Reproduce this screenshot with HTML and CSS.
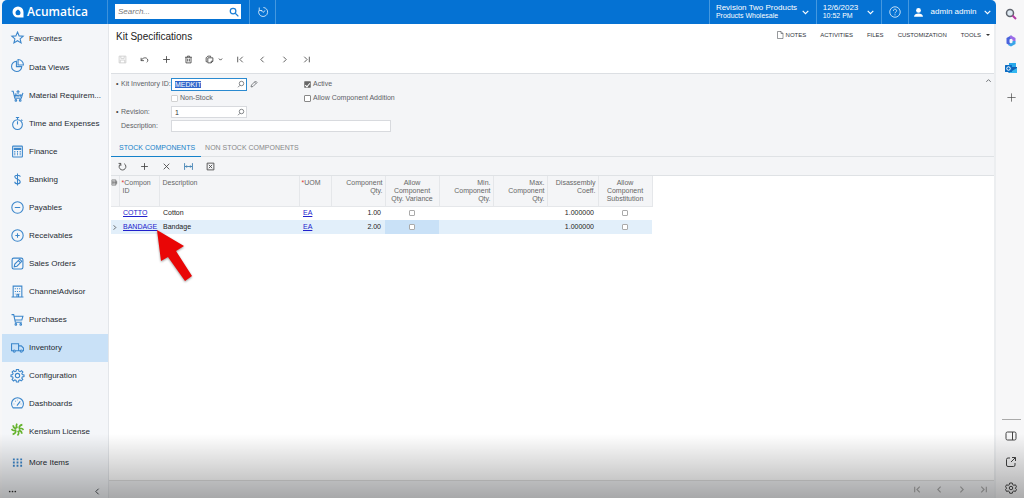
FILE: index.html
```
<!DOCTYPE html>
<html lang="en">
<head>
<meta charset="utf-8">
<title>Kit Specifications - Acumatica</title>
<link rel="stylesheet" href="styles.css">
</head>
<body>
<svg class="defs" aria-hidden="true">
  <symbol id="plus" viewBox="0 0 16 16"><path d="M8 2v12M2 8h12"/></symbol>
  <symbol id="left" viewBox="0 0 16 16"><path d="M10 3 5 8l5 5"/></symbol>
  <symbol id="right" viewBox="0 0 16 16"><path d="m6 3 5 5-5 5"/></symbol>
  <symbol id="down" viewBox="0 0 16 16"><path d="m3 5 5 5 5-5"/></symbol>
  <symbol id="up" viewBox="0 0 16 16"><path d="m3 11 5-5 5 5"/></symbol>
  <symbol id="first" viewBox="0 0 16 16"><path d="M3 3v10M12 3 7 8l5 5"/></symbol>
  <symbol id="last" viewBox="0 0 16 16"><path d="M13 3v10M4 3l5 5-5 5"/></symbol>
  <symbol id="lens" viewBox="0 0 16 16"><circle cx="9" cy="7" r="4.5"/><path d="m6 10.500-4 4"/></symbol>
</svg>
<div class="window">
  <div class="app">
    <header class="topbar">
      <a class="brand" href="#"><svg class="brand-mark" viewBox="0 0 24 24"><path fill="#fff" fill-rule="evenodd" d="M12 1A11 11 0 1 0 12 23H23V12A11 11 0 0 0 12 1Zm0 6c3 2 5 4 5 6.500a5 5 0 0 1-10 0C7 11 9 9 12 7Z"/></svg>Acumatica</a>
      <label class="search"><input type="search" placeholder="Search..." aria-label="Search"><svg class="icon" viewBox="0 0 16 16"><circle cx="6.500" cy="6.500" r="4.500"/><path d="m10 10 5 5"/></svg></label>
      <button class="top-btn recent" aria-label="Recent"><svg class="icon" viewBox="0 0 16 16"><path d="M8.500 2a6 6 0 1 1-6 4M3 2v4h4M5.500 6 8 8.500 11 6"/></svg></button>
      <button class="top-btn company"><span class="two">Revision Two Products<small>Products Wholesale</small></span><svg class="icon"><use href="#down"/></svg></button>
      <button class="top-btn date"><span class="two">12/6/2023<small>10:52 PM</small></span><svg class="icon"><use href="#down"/></svg></button>
      <button class="top-btn help" aria-label="Help"><svg class="icon" viewBox="0 0 16 16"><circle cx="8" cy="8" r="7"/><path d="M5.800 6.500C5.800 3.500 10.200 3.500 10.200 6.300 10.200 8 8 8 8 9.800M8 11v1.500"/></svg></button>
      <button class="top-btn user"><svg class="icon person" viewBox="0 0 16 16"><circle cx="8" cy="5" r="3.500"/><path d="M1.500 14c0-6 13-6 13 0Z"/></svg>admin admin<svg class="icon"><use href="#down"/></svg></button>
    </header>
    <div class="body">
      <nav class="sidebar">
        <a class="tall" href="#"><svg viewBox="0 0 24 24"><path d="m12 2 3 7 7.500.500-5.700 5 1.800 7.500-6.600-4-6.600 4 1.800-7.500-5.700-5L9 9Z"/></svg><span>Favorites</span></a>
        <a class="tall" href="#"><svg class="raised" viewBox="0 0 24 24"><path d="M10 4a9.500 9.500 0 1 0 10 10h-10ZM13 1v10h10A10 10 0 0 0 13 1Z"/></svg><span>Data Views</span></a>
        <a href="#"><svg viewBox="0 0 24 24"><path d="M1 4h3l3 13h12l3-10M6 12l14-1M13 2v7M10 5h6M9 8v7M13 12v3M17 10v5"/><circle cx="9" cy="21" r="1.500"/><circle cx="17" cy="21" r="1.500"/></svg><span>Material Requirem...</span></a>
        <a href="#"><svg viewBox="0 0 24 24"><circle cx="12" cy="14" r="9"/><path d="M12 14V8M9 1h6M12 1v4M19 5l2 2"/></svg><span>Time and Expenses</span></a>
        <a href="#"><svg viewBox="0 0 24 24"><rect x="3" y="2" width="18" height="20" rx="1"/><path d="M6 6h12v2H6zM6 12h2M11 12h2M16 12h2M6 15h2M11 15h2M16 15h2M6 18h2M11 18h2M16 18h2"/></svg><span>Finance</span></a>
        <a href="#"><svg viewBox="0 0 24 24"><path d="M17 7c0-4-10-4-10 0 0 5 10 4 10 9 0 5-10 5-10 0M12 1v22"/></svg><span>Banking</span></a>
        <a href="#"><svg viewBox="0 0 24 24"><circle cx="12" cy="12" r="10.500"/><path d="M7 12h10"/></svg><span>Payables</span></a>
        <a href="#"><svg viewBox="0 0 24 24"><circle cx="12" cy="12" r="10.500"/><path d="M8 12h8M12 8v8"/></svg><span>Receivables</span></a>
        <a href="#"><svg viewBox="0 0 24 24"><rect x="2" y="2" width="20" height="20" rx="3"/><path d="m6 18 1-5 9-9 4 4-9 9ZM14 7l3 3"/></svg><span>Sales Orders</span></a>
        <a href="#"><svg viewBox="0 0 24 24"><path d="M1 22h22M4 22V2h16v20M8 6v2M12 6v2M16 6v2M8 11v2M12 11v2M16 11v2M8 16v1M16 16v1M11 22v-5h3v5"/></svg><span>ChannelAdvisor</span></a>
        <a href="#"><svg viewBox="0 0 24 24"><path d="M1 3h4l3 14h12M6 6h16l-2 7H7"/><circle cx="9" cy="21" r="1.500"/><circle cx="18" cy="21" r="1.500"/></svg><span>Purchases</span></a>
        <a class="current" href="#"><svg viewBox="0 0 24 24"><path d="M4 18H1V5h13v13H8M14 9h5l4 4v5h-2M14 18h3"/><circle cx="6" cy="18.500" r="2"/><circle cx="19" cy="18.500" r="2"/></svg><span>Inventory</span></a>
        <a href="#"><svg viewBox="0 0 24 24"><circle cx="12" cy="12" r="4"/><path d="M10 1h4l.6 3 2.200.900L19.400 3 22 5.800 20 8.300l.9 2L24 11v3l-3.200.7-.9 2.100L21.700 19.400 19 22l-2.500-1.800-2.100.8L14 24h-4l-.6-3-2.200-.9L4.600 22 2 19.200l1.900-2.500L3 14.600.0 14v-3l3-.8.900-2L2 5.600 4.800 3l2.500 1.800 2.100-.8Z"/></svg><span>Configuration</span></a>
        <a href="#"><svg viewBox="0 0 24 24"><path d="M4 20a11 11 0 1 1 16 0ZM11 16l6-8M5 13h1M8 7l1 1M12 5v1M19 13h-1"/></svg><span>Dashboards</span></a>
        <a href="#"><svg class="kensium raised" viewBox="0 0 24 24"><path d="M12 9c-3-2-3-4-1-8M15 10c0-4 1-6 6-7M15 12c3-3 6-2 8 1M14 14c4 0 6 2 6 6M12 15c3 2 3 5 0 8M9 14c0 4-2 6-6 7M9 12c-3 3-6 2-8-1M10 10C6 10 4 8 4 4"/></svg><span>Kensium License</span></a>
        <a class="more" href="#"><svg class="grid-dots" viewBox="0 0 24 24"><path d="M2 3h4v4H2zM10 3h4v4h-4zM18 3h4v4h-4zM2 10h4v4H2zM10 10h4v4h-4zM18 10h4v4h-4zM2 17h4v4H2zM10 17h4v4h-4zM18 17h4v4h-4z"/></svg><span>More Items</span></a>
        <div class="side-foot"><button aria-label="Menu options"><svg class="icon dots" viewBox="0 0 16 16"><circle cx="3" cy="8" r="1.500"/><circle cx="8" cy="8" r="1.500"/><circle cx="13" cy="8" r="1.500"/></svg></button><button aria-label="Collapse menu"><svg class="icon"><use href="#left"/></svg></button></div>
      </nav>
      <main class="main">
        <div class="title-row">
          <h1>Kit Specifications</h1>
          <div class="links">
            <button><svg class="icon" viewBox="0 0 16 16"><path d="M3 1h7l4 4v10H3zM10 1v4h4"/></svg>NOTES</button>
            <button>ACTIVITIES</button><button>FILES</button><button>CUSTOMIZATION</button>
            <button>TOOLS<span class="caret"></span></button>
          </div>
        </div>
        <div class="toolbar">
          <button disabled aria-label="Save"><svg class="icon" viewBox="0 0 16 16"><path d="M2 2h12v12H2zM5 2v4h6V2M4 14V9h8v5"/></svg></button>
          <button aria-label="Undo"><svg class="icon" viewBox="0 0 16 16"><path d="M2 5v5h5M2 10c3-6 10-7 12-1 0 2-1 3-2 4"/></svg></button>
          <button aria-label="Add"><svg class="icon"><use href="#plus"/></svg></button>
          <button aria-label="Delete"><svg class="icon" viewBox="0 0 16 16"><path d="M2 4h12M6 4V2h4v2M3.500 4v10h9V4M6.500 6.500v5M9.500 6.500v5"/></svg></button>
          <button class="wide" aria-label="Copy and paste"><svg class="icon" viewBox="0 0 16 16"><path d="M4 12H2V5l3-3h5v2M5 5h9v6l-3 3H5zM14 11h-3v3"/></svg><svg class="icon tiny"><use href="#down"/></svg></button>
          <button aria-label="First"><svg class="icon"><use href="#first"/></svg></button>
          <button aria-label="Previous"><svg class="icon"><use href="#left"/></svg></button>
          <button aria-label="Next"><svg class="icon"><use href="#right"/></svg></button>
          <button aria-label="Last"><svg class="icon"><use href="#last"/></svg></button>
        </div>
        <section class="panel">
          <form class="summary">
            <div class="fields">
              <label class="req" for="kit">Kit Inventory ID:</label>
              <div class="field"><span class="lookup focus"><input id="kit" type="text" value="MEDKIT"><svg class="icon"><use href="#lens"/></svg></span><button type="button" aria-label="Edit"><svg class="icon" viewBox="0 0 16 16"><path d="m2 14 1-4 8-8 3 3-8 8ZM9 4l3 3"/></svg></button></div>
              <label class="check"><input type="checkbox" checked>Active</label>
              <label class="check second"><input type="checkbox" disabled>Non-Stock</label>
              <label class="check"><input type="checkbox">Allow Component Addition</label>
              <label class="req" for="rev">Revision:</label>
              <div class="field"><span class="lookup"><input id="rev" type="text" value="1"><svg class="icon"><use href="#lens"/></svg></span></div>
              <label class="first" for="desc">Description:</label>
              <input class="desc" id="desc" type="text">
            </div>
            <button class="collapse" type="button" aria-label="Collapse"><svg class="icon"><use href="#up"/></svg></button>
          </form>
          <div class="tabs" role="tablist"><button role="tab" aria-selected="true">STOCK COMPONENTS</button><button role="tab" aria-selected="false">NON STOCK COMPONENTS</button></div>
          <div class="toolbar grid-tools">
            <button aria-label="Refresh"><svg class="icon" viewBox="0 0 16 16"><path d="M5 3a6 6 0 1 0 6 0M5 7V2.500H1"/></svg></button>
            <button aria-label="Add row"><svg class="icon"><use href="#plus"/></svg></button>
            <button aria-label="Delete row"><svg class="icon" viewBox="0 0 16 16"><path d="m3 3 10 10M13 3 3 13"/></svg></button>
            <button aria-label="Fit to screen"><svg class="icon fit" viewBox="0 0 16 16"><path d="M1 2v12M15 2v12M2 8h12M5 6 3 8l2 2M11 6l2 2-2 2"/></svg></button>
            <button aria-label="Export to Excel"><svg class="icon" viewBox="0 0 16 16"><path d="M2 2h12v12H2zM5 5l6 6M11 5l-6 6"/></svg></button>
          </div>
        </section>
        <section class="grid">
          <table>
            <colgroup><col class="c-mark"><col class="c-id"><col class="c-desc"><col class="c-uom"><col class="c-num"><col class="c-num"><col class="c-num"><col class="c-num"><col class="c-coef"><col class="c-num"></colgroup>
            <thead><tr>
              <th class="mark"><svg class="icon" viewBox="0 0 16 16"><path d="M2 2h9v12H2zM4 5h9v6H4zM4 8h9"/></svg></th>
              <th class="star">Compon ID</th><th>Description</th><th class="star">UOM</th>
              <th class="num">Component Qty.</th><th class="mid">Allow Component Qty. Variance</th><th class="num">Min. Component Qty.</th><th class="num">Max. Component Qty.</th><th class="num">Disassembly Coeff.</th><th class="mid">Allow Component Substitution</th>
            </tr></thead>
            <tbody>
              <tr><td></td><td><a href="#">COTTO</a></td><td>Cotton</td><td><a href="#">EA</a></td><td class="num">1.00</td><td class="mid"><input type="checkbox" aria-label="Allow quantity variance"></td><td></td><td></td><td class="num">1.000000</td><td class="mid"><input type="checkbox" aria-label="Allow substitution"></td></tr>
              <tr class="active"><td class="mark"><svg class="icon"><use href="#right"/></svg></td><td><a href="#">BANDAGE</a></td><td>Bandage</td><td><a href="#">EA</a></td><td class="num">2.00</td><td class="mid cell"><input type="checkbox" aria-label="Allow quantity variance"></td><td></td><td></td><td class="num">1.000000</td><td class="mid"><input type="checkbox" aria-label="Allow substitution"></td></tr>
            </tbody>
          </table>
        </section>
        <footer class="pager">
          <button aria-label="First page"><svg class="icon"><use href="#first"/></svg></button>
          <button aria-label="Previous page"><svg class="icon"><use href="#left"/></svg></button>
          <button aria-label="Next page"><svg class="icon"><use href="#right"/></svg></button>
          <button aria-label="Last page"><svg class="icon"><use href="#last"/></svg></button>
        </footer>
      </main>
    </div>
  </div>
  <aside class="rail">
    <button aria-label="Search"><svg viewBox="0 0 24 24"><circle class="lens-glass" cx="10" cy="10" r="7"/><path class="lens-handle" d="m15 15 7 7"/></svg></button>
    <button aria-label="Microsoft 365"><svg viewBox="0 0 24 24"><path fill="#4a63dc" d="M12 1 3 6v11l5 3 4-3-3-2V9l5-3V2Z"/><path fill="#9b6be8" d="m12 1 9 5v7l-6-2V9l-5-3V2Z"/><path fill="#3aa5e8" d="M21 12v6l-9 5-6-3 9-5v-3Z"/></svg></button>
    <button aria-label="Outlook"><svg viewBox="0 0 24 24"><path fill="#28a8ea" d="M8 2h14v10H8z"/><path fill="#0f5fb4" d="M7 10h17v12H7z"/><path fill="#35b8f1" d="m7 22 17-10v10Z"/><rect fill="#0a6cc4" y="6" width="14" height="14" rx="1"/><circle cx="7" cy="13" r="3.500" fill="none" stroke="#fff" stroke-width="2"/></svg></button>
    <button class="line add" aria-label="Add app"><svg viewBox="0 0 16 16"><use href="#plus"/></svg></button>
    <hr>
    <button class="line" aria-label="Side panel"><svg viewBox="0 0 24 24"><rect x="2" y="4" width="20" height="16" rx="3"/><path d="M15 4v16"/></svg></button>
    <button class="line" aria-label="Open in new window"><svg viewBox="0 0 24 24"><path d="M10 4H6a3 3 0 0 0-3 3v11a3 3 0 0 0 3 3h11a3 3 0 0 0 3-3v-4M14 3h7v7M21 3l-9 9"/></svg></button>
    <button class="line" aria-label="Settings"><svg viewBox="0 0 24 24"><circle cx="12" cy="12" r="3.500"/><path d="m9.500 2 5 0 1 3.500 2 1 3.500-.800 2 4-2.500 2.600 2.500 2.500-2 4-3.500-.800-2 1.200-1 3.300h-5l-1-3.300-2-1.200-3.500.800-2-4 2.500-2.500L1 9.700l2-4 3.500.800 2-1Z"/></svg></button>
  </aside>
  <svg class="pointer" viewBox="0 0 40 56" aria-hidden="true"><path d="m2 2 27 16-8 5 16 25-7 5-17-24-7 4Z"/></svg>
  <div class="shade"></div>
</div>
<script src="app.js"></script>
</body>
</html>
```
FILE: styles.css
```
* { box-sizing: border-box; }
body {
  margin: 0;
  font: 7px/8px "Liberation Sans", Arial, sans-serif;
  color: #30343a;
}
button, input { font: inherit; color: inherit; }
button { border: 0; padding: 0; background: none; display: flex; align-items: center; justify-content: center; }
.defs { display: none; }
.icon { width: 9px; height: 9px; fill: none; stroke: currentColor; stroke-width: 2; flex: none; display: block; }
.window { position: relative; display: flex; min-height: 100vh; background: #f7f7f8; padding-left: 2px; overflow: hidden; }
.app { flex: 1; min-width: 0; display: flex; flex-direction: column; background: #fff; border-radius: 5px 5px 0 0; overflow: hidden; }

.topbar { display: flex; height: 24px; background: #0572d3; color: #fff; font-size: 8px; }
.brand { display: flex; align-items: center; gap: 3px; width: 106px; padding-left: 10px; color: #fff; text-decoration: none; font: 600 12px/24px "Open Sans", sans-serif; border-right: 1px solid #3d91db; }
.brand-mark { width: 12px; height: 12px; }
.search { display: flex; align-items: center; width: 126px; height: 15px; margin: 4px 8px 0 7px; padding-right: 2px; background: #fff; color: #1b7fd6; }
.search .icon { width: 10px; height: 10px; }
.search input { flex: 1; min-width: 0; border: 0; padding: 0 3px; outline: 0; background: none; font-size: 8px; font-style: italic; color: #555; }
.search input::placeholder { color: #777; }
.top-btn { border-left: 1px solid #4598df; gap: 4px; }
.recent { width: 27px; border-right: 1px solid #4598df; }
.recent .icon, .help .icon { width: 12px; height: 12px; stroke-width: 1; }
.two { text-align: left; }
.two small { display: block; font-size: 7px; }
.company { width: 107px; margin-left: auto; }
.date { width: 65px; gap: 8px; }
.help { width: 27px; }
.user { width: 88px; gap: 7px; }
.person { width: 11px; height: 11px; fill: #fff; stroke: none; }

.body { flex: 1; display: flex; }
.sidebar { width: 106px; flex: none; display: flex; flex-direction: column; background: #f4f6f9; }
.sidebar a { display: flex; align-items: center; gap: 5px; height: 28px; padding-left: 9px; color: #252b33; text-decoration: none; font-size: 8px; line-height: 12px; white-space: nowrap; }
.sidebar a.tall { height: 29px; }
.sidebar a.more { height: 34px; }
.sidebar a.current { background: #c9e1f7; }
.sidebar a > svg { width: 13px; height: 13px; flex: none; fill: none; stroke: #3b86cb; stroke-width: 2; overflow: visible; margin-bottom: 2px; }
.sidebar a > svg.raised { margin-bottom: 5px; }
.sidebar a > svg.kensium { stroke: #65b32e; stroke-width: 3; }
.sidebar a > svg.grid-dots { width: 11px; height: 11px; margin: 0 1px 2px; fill: #3b86cb; stroke: none; }
.side-foot { display: flex; justify-content: space-between; padding: 7px 6px 0; margin-top: auto; height: 18px; align-items: flex-start; }
.side-foot .icon { stroke-width: 1.5; }
.side-foot .dots { fill: #333; stroke: none; }

.main { flex: 1; min-width: 0; display: flex; flex-direction: column; border-left: 1px solid #e3e6ea; border-right: 2px solid #eceef0; }
.title-row { display: flex; justify-content: space-between; align-items: flex-start; padding: 0 4px 0 7px; height: 24px; }
h1 { margin: 0; padding-top: 1px; font-size: 10px; line-height: 24px; font-weight: 400; color: #222; }
.links { display: flex; gap: 14px; height: 21px; font-size: 6px; }
.links button { gap: 2px; }
.links .icon { width: 8px; height: 8px; stroke-width: 1; }
.caret { margin-left: 3px; border: 2px solid transparent; border-top-color: #333; border-bottom: 0; }
.toolbar { display: flex; align-items: center; height: 22px; padding-left: 2px; }
.toolbar button { width: 22px; }
.toolbar .wide { width: 30px; gap: 4px; }
.toolbar .icon { stroke-width: 1.5; color: #444; }
.toolbar .tiny { width: 5px; height: 5px; stroke-width: 3; }
.toolbar button:disabled .icon { color: #ccc; }
.title-row + .toolbar { margin-bottom: 3px; }

.panel { margin-left: 2px; background: #f4f5f7; border-top: 1px solid #dcdfe3; }
.summary { display: flex; padding: 3px 2px 6px 5px; color: #5d6166; }
.fields { display: grid; grid-template-columns: 55px 133px 87px; grid-auto-rows: 14px; align-items: center; }
.fields > label { padding-left: 5px; white-space: nowrap; }
.fields > .req { padding-left: 0; grid-column: 1; }
.fields > .first { grid-column: 1; }
.req::before { content: "•"; display: inline-block; width: 5px; color: #444; }
.fields > .check { padding: 0; }
.fields > .second { grid-column: 2; }
.field { display: flex; gap: 3px; align-items: center; }
.field button .icon, .lookup .icon { width: 8px; height: 8px; stroke-width: 1.5; }
.lookup { display: flex; align-items: center; width: 76px; height: 12px; border: 1px solid #d8dade; background: #fff; padding-right: 1px; }
.lookup.focus { border: 1px solid #2b8ad0; height: 13px; }
.lookup input { flex: 1; min-width: 0; height: 10px; border: 0; outline: 0; padding: 0 3px; background: none; color: #333; }
.lookup input::selection { background: #2f66cb; color: #fff; }
.desc { grid-column: 2 / 4; width: 100%; height: 12px; border: 1px solid #d8dade; background: #fff; padding: 0 3px; }
.check { display: flex; align-items: center; gap: 2px; height: 14px; white-space: nowrap; }
input[type="checkbox"] { appearance: none; margin: 0; width: 7px; height: 7px; border: 1px solid #888; border-radius: 1px; background: #fff; flex: none; }
input[type="checkbox"]:checked { background: #666; display: grid; place-items: center; }
input[type="checkbox"]:checked::after { content: ""; width: 2px; height: 4px; border: solid #fff; border-width: 0 1px 1px 0; transform: rotate(40deg); }
input[type="checkbox"]:disabled { border-color: #d2d2d2; }
.collapse { margin-left: auto; align-self: flex-start; }
.collapse .icon { width: 7px; height: 7px; }
.tabs { display: flex; height: 18px; border-bottom: 1px solid #dfe2e5; color: #888; }
.tabs button { padding: 0 4px; height: 18px; white-space: nowrap; border-bottom: 1px solid transparent; }
.tabs [aria-selected="true"] { color: #1581c9; border-color: #1581c9; padding: 0 6px 0 8px; }
.grid-tools { height: 18px; padding-left: 0; }
.grid-tools .fit { color: #357aae; }

.grid { flex: 1; margin-left: 2px; border-top: 1px solid #dfe2e5; }
table { width: 541px; table-layout: fixed; border-collapse: collapse; }
.c-mark { width: 8px; }
.c-id { width: 40px; }
.c-desc { width: 140px; }
.c-uom { width: 32px; }
.c-num { width: 54px; }
.c-coef { width: 51px; }
th { height: 30px; padding: 3px 2px 0 3px; background: #f4f5f7; border-right: 1px solid #e5e7ea; border-bottom: 1px solid #e5e7ea; vertical-align: top; text-align: left; font-weight: 400; color: #666; }
th.star::before { content: "*"; color: #d33; margin-left: -1px; }
td { height: 14px; padding: 0 4px; white-space: nowrap; color: #222; }
th.num { padding-left: 6px; }
.num { text-align: right; }
.mid { text-align: center; }
th.mid { padding: 3px 5px 0; }
.mark, th.mark { padding: 3px 0 0; }
td.mark { padding: 0; }
.mark .icon { width: 7px; height: 7px; stroke-width: 1.5; }
td input[type="checkbox"] { display: block; margin: 0 auto; width: 6px; height: 6px; border-color: #aaa; }
td a { color: #2121cc; text-decoration: underline; }
.active td { background: #e2effa; }
.active .cell { background: #c9e1f7; }
.pager { display: flex; justify-content: flex-end; align-items: center; height: 18px; background: #f0f1f3; border-top: 1px solid #ddd; color: #aaa; }
.pager button { width: 22px; }

.rail { width: 28px; flex: none; display: flex; flex-direction: column; align-items: center; padding-left: 2px; }
.rail button { height: 27px; }
.rail svg { width: 12px; height: 12px; fill: none; }
.rail .add { height: 32px; }
.lens-glass { stroke: #60656e; stroke-width: 3; fill: #dfeaf3; }
.lens-handle { stroke: #b33ca4; stroke-width: 4; }
.line svg { stroke: #444; stroke-width: 2; }
.rail .add svg { width: 11px; height: 11px; stroke-width: 1; }
hr { width: 19px; margin: auto 0 0; border: 0; border-top: 1px solid #aaa; }
.rail hr ~ button { height: 26px; padding-top: 5px; }

.pointer { position: absolute; left: 155px; top: 228px; width: 40px; height: 56px; fill: #e90606; filter: drop-shadow(0 1px 1px #0006); pointer-events: none; }
.shade { position: absolute; inset: auto 0 0; height: 64px; background: linear-gradient(#0000, #0000004d); pointer-events: none; }
```
FILE: app.js
```
const kit = document.getElementById("kit");
kit.focus();
kit.select();
```
